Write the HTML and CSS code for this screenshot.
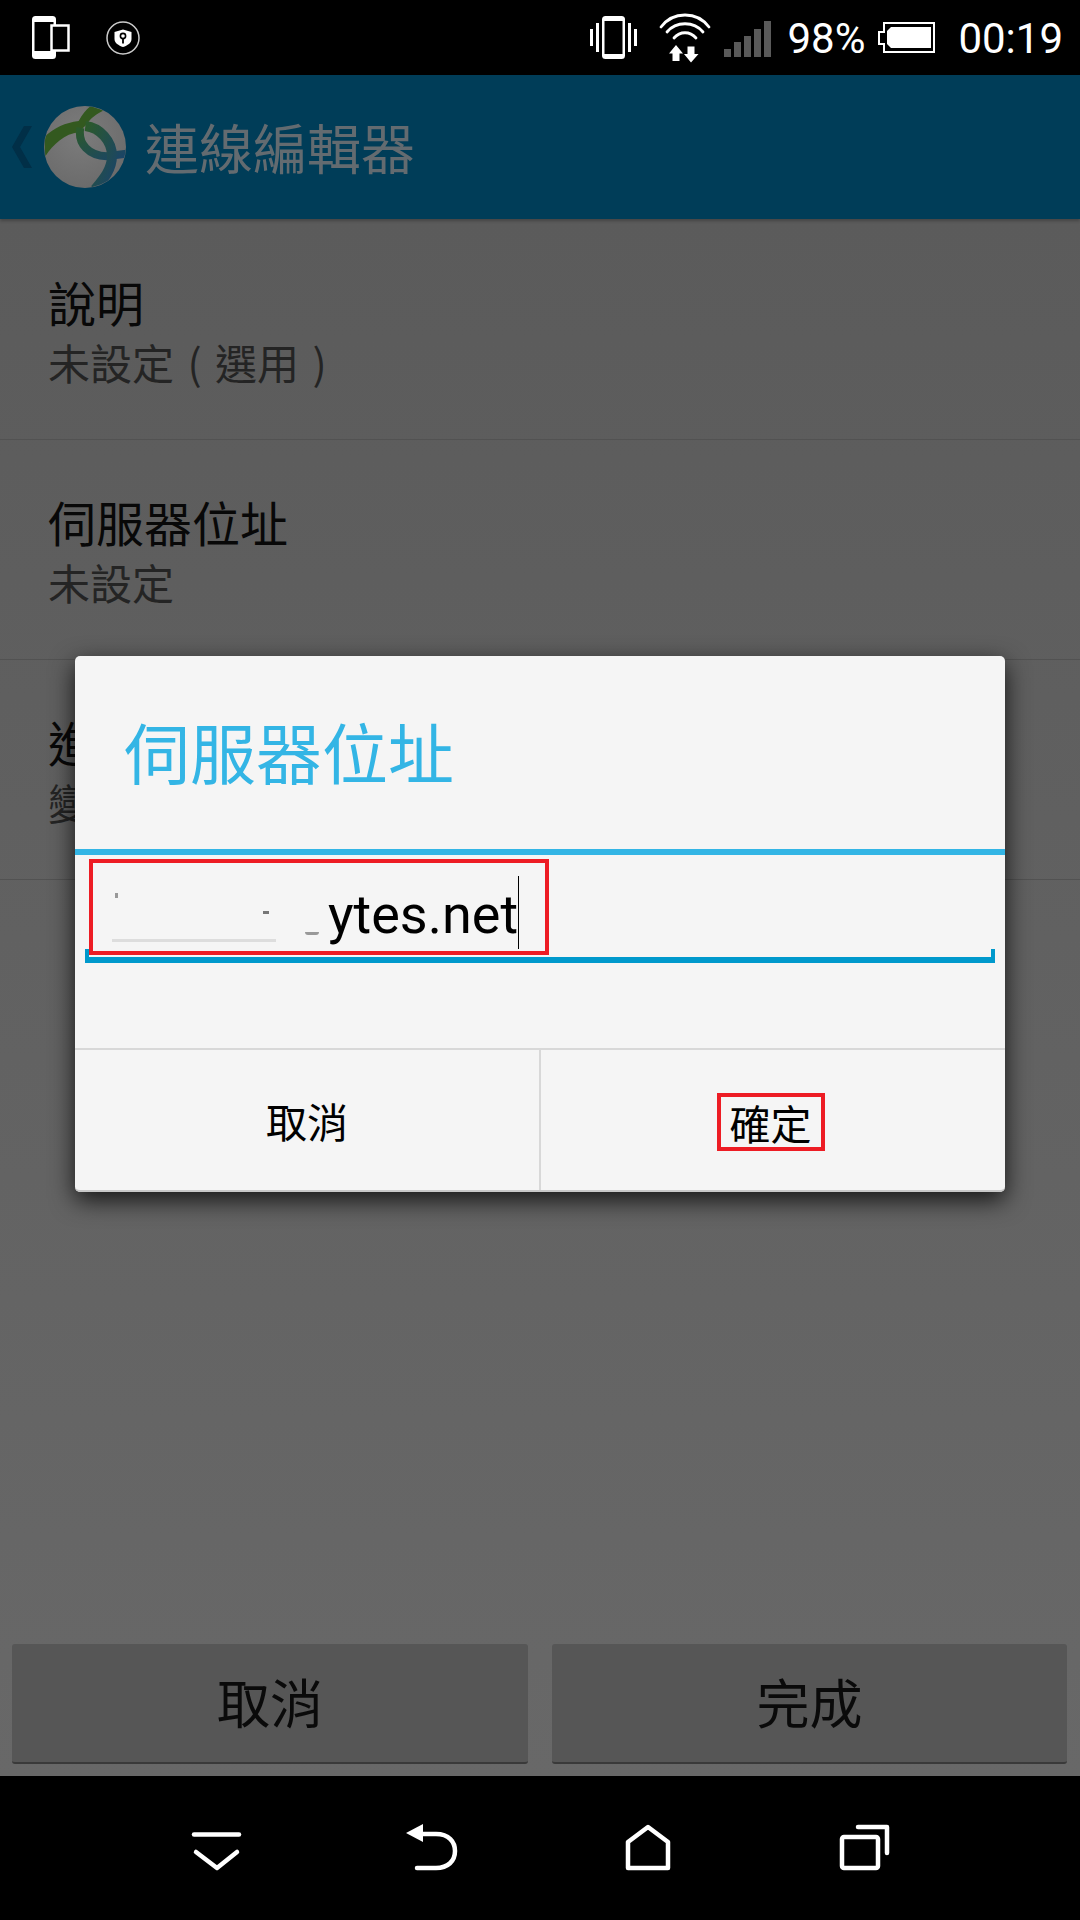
FILE: index.html
```html
<!DOCTYPE html>
<html lang="zh-Hant">
<head>
    <meta charset="UTF-8">
    <meta name="viewport" content="width=device-width, initial-scale=1.0">
    <title>連線編輯器</title>
    <link rel="stylesheet" href="styles.css">
</head>
<body>
    <div class="screen">
        <!-- Barra de status -->
        <div class="status-bar">
            <svg class="ic-devices" width="38" height="43" viewBox="0 0 38 43">
                <rect x="0" y="0" width="24" height="43" rx="3.500" fill="#fff"/>
                <rect x="2.500" y="6" width="19" height="29" fill="#000"/>
                <rect x="19.500" y="9.500" width="17" height="25" fill="#000" stroke="#fff" stroke-width="2.500"/>
            </svg>
            <svg class="ic-shield" width="34" height="34" viewBox="0 0 34 34">
                <circle cx="17" cy="17" r="16" fill="none" stroke="#ccc" stroke-width="1.500"/>
                <path d="M17 8.500 L25.500 11 V18 C25.500 22 21.500 24.500 17 26 C12.500 24.500 8.500 22 8.500 18 V11 Z" fill="#fff"/>
                <circle cx="17" cy="15" r="2.600" fill="none" stroke="#000" stroke-width="1.600"/>
                <path d="M17 17.500 V22.500" stroke="#000" stroke-width="1.800"/>
            </svg>
            <div class="status-spacer"></div>
            <svg class="ic-vibrate" width="47" height="43" viewBox="0 0 47 43">
                <rect x="12" y="0" width="23" height="43" rx="3.500" fill="#fff"/>
                <rect x="14.500" y="5" width="18" height="33" fill="#000"/>
                <path d="M1.500 13 V30 M7.500 7 V36 M39.500 7 V36 M45.500 13 V30" stroke="#fff" stroke-width="3"/>
            </svg>
            <svg class="ic-wifi" width="52" height="51" viewBox="0 0 52 51">
                <g fill="none" stroke="#fff" stroke-width="2.800" stroke-linecap="round">
                    <path d="M2 15 C14 -1 38 -1 50 15"/>
                    <path d="M8 20 C17 9 35 9 44 20"/>
                    <path d="M15 26 C21 19 31 19 37 26"/>
                </g>
                <path d="M17 33 L10 41.500 H13.500 V49 H20.500 V41.500 H24 Z" fill="#fff"/>
                <path d="M28.500 34.500 H35.500 V42 H39.500 L32 50.500 L25 42 H28.500 Z" fill="#fff"/>
            </svg>
            <svg class="ic-signal" width="47" height="36" viewBox="0 0 47 36">
                <rect x="0" y="28" width="7" height="8" fill="#5a5a5a"/>
                <rect x="10" y="21" width="7" height="15" fill="#5a5a5a"/>
                <rect x="20" y="15" width="7" height="21" fill="#5a5a5a"/>
                <rect x="30" y="8" width="7" height="28" fill="#5a5a5a"/>
                <rect x="40" y="0" width="7" height="36" fill="#5a5a5a"/>
            </svg>
            <span class="status-text battery-pct">98%</span>
            <svg class="ic-battery" width="57" height="31" viewBox="0 0 57 31">
                <path d="M6 1 H56 V30 H6 V22 H1 V10 H6 Z" fill="none" stroke="#fff" stroke-width="2"/>
                <rect x="13" y="5" width="40" height="21" fill="#fff"/>
                <path d="M9 9 V22 L13 26 V5 Z" fill="#fff"/>
            </svg>
            <span class="status-text clock">00:19</span>
        </div>

        <div class="app">
            <!-- Barra superior -->
            <div class="app-bar">
                <svg class="ic-back" width="20" height="42" viewBox="0 0 20 42">
                    <path d="M20 0 H12 L0 21 L12 42 H20 L8 21 Z" fill="#012f47"/>
                </svg>
                <svg class="app-logo" width="82" height="82" viewBox="132 35 246 246">
                    <defs>
                        <clipPath id="ball"><circle cx="255" cy="158" r="122"/></clipPath>
                        <radialGradient id="shade" cx="0.45" cy="0.35" r="0.7">
                            <stop offset="0" stop-color="#7c7c7c"/>
                            <stop offset="1" stop-color="#6a6a6a"/>
                        </radialGradient>
                        <linearGradient id="loop" x1="0" y1="0" x2="1" y2="1">
                            <stop offset="0" stop-color="#2c5a2a"/>
                            <stop offset="1" stop-color="#1a4468"/>
                        </linearGradient>
                    </defs>
                    <circle cx="255" cy="158" r="123" fill="url(#shade)"/>
                    <g clip-path="url(#ball)">
                        <path d="M132 128 C165 100 195 85 236 80 C246 62 258 45 272 35 L312 48 C288 60 272 72 262 88 L236 114 C195 118 160 150 136 186 Z" fill="#33591f"/>
                        <path d="M241 100 C232 150 268 184 320 186 L380 178" fill="none" stroke="url(#loop)" stroke-width="24"/>
                        <path d="M256 95 C300 100 336 140 336 185 C336 225 310 255 285 285" fill="none" stroke="url(#loop)" stroke-width="30"/>
                    </g>
                </svg>
                <h1 class="app-title">連線編輯器</h1>
            </div>

            <div class="content">
                <div class="list">
                    <div class="list-row">
                        <p class="row-title">說明</p>
                        <p class="row-sub">未設定 ( 選用 )</p>
                    </div>
                    <div class="list-row">
                        <p class="row-title">伺服器位址</p>
                        <p class="row-sub">未設定</p>
                    </div>
                    <div class="list-row">
                        <p class="row-title">進階</p>
                        <p class="row-sub">變更</p>
                    </div>
                </div>
                <div class="footer">
                    <button class="footer-btn">取消</button>
                    <button class="footer-btn">完成</button>
                </div>
            </div>

            <!-- Diálogo -->
            <div class="overlay">
                <div class="dialog">
                    <div class="dialog-title">伺服器位址</div>
                    <div class="dialog-body">
                        <div class="field">
                            <span class="redacted">
                                <i class="smudge smudge-a"></i>
                                <i class="smudge smudge-b"></i>
                                <i class="smudge smudge-c"></i>
                                <i class="smudge smudge-line"></i>
                            </span>
                            <span class="field-text">ytes.net</span>
                            <span class="caret"></span>
                        </div>
                    </div>
                    <div class="dialog-actions">
                        <button class="dialog-btn">取消</button>
                        <button class="dialog-btn"><span class="mark">確定</span></button>
                    </div>
                    <div class="mark-field"></div>
                </div>
            </div>
        </div>

        <!-- Barra de navegação -->
        <div class="nav-bar">
            <svg width="56" height="50" viewBox="0 0 56 50">
                <g fill="none" stroke="#fff" stroke-width="4.500" stroke-linecap="round" stroke-linejoin="round">
                    <path d="M4 11.500 H49"/>
                    <path d="M6 29 L27 45 L47 29"/>
                </g>
            </svg>
            <svg width="56" height="50" viewBox="0 0 56 50">
                <path d="M1 10 L18 1 V19 Z" fill="#fff"/>
                <path d="M16 11 H31 C44 11 50 19 50 28 C50 38 43 45 31 45 H12" fill="none" stroke="#fff" stroke-width="4.500" stroke-linecap="round"/>
            </svg>
            <svg width="56" height="50" viewBox="0 0 56 50">
                <path d="M8 45 V19 L28 4 L48 19 V45 Z" fill="none" stroke="#fff" stroke-width="4.500" stroke-linejoin="round"/>
            </svg>
            <svg width="56" height="50" viewBox="0 0 56 50">
                <rect x="7" y="14" width="36" height="31" rx="2" fill="none" stroke="#fff" stroke-width="4.500"/>
                <path d="M23 4 H52 V30" fill="none" stroke="#fff" stroke-width="4.500" stroke-linecap="round" stroke-linejoin="round"/>
            </svg>
        </div>
    </div>
</body>
</html>
```
FILE: styles.css
```css
:root {
    --bar-color: #003d58;
    --row-line: #525252;
    --dialog-bg: #f5f5f5;
    --dialog-line: #d8d8d8;
    --holo-light: #33b5e5;
    --holo-dark: #0099cc;
    --mark-red: #ed1c24;
}

* {
    box-sizing: border-box;
}

html,
body {
    margin: 0;
    padding: 0;
    height: 100%;
    background-color: #000;
}

body {
    font-family: 'Noto Sans CJK TC', 'Roboto', sans-serif;
    overflow: hidden;
}

p,
h1 {
    margin: 0;
    font-weight: 400;
}

.screen {
    display: flex;
    flex-direction: column;
    width: 1080px;
    height: 1920px;
}

/* Barra de status */
.status-bar {
    display: flex;
    align-items: center;
    flex: 0 0 75px;
    padding: 0 17px 0 32px;
    background-color: #000;
}

.status-spacer {
    flex: 1;
}

.status-text {
    margin-top: 2px;
    font-family: 'Roboto', sans-serif;
    font-size: 42px;
    line-height: 73px;
    color: #fff;
}

.ic-shield {
    margin-left: 36px;
}

.ic-wifi {
    margin-left: 22px;
}

.ic-signal {
    margin-left: 13px;
    margin-top: 3px;
}

.battery-pct {
    margin-left: 16px;
}

.ic-battery {
    margin-left: 13px;
}

.clock {
    margin-left: 23px;
}

/* Área do app */
.app {
    position: relative;
    flex: 1;
    display: flex;
    flex-direction: column;
    min-height: 0;
}

.app-bar {
    display: flex;
    align-items: center;
    flex: 0 0 144px;
    padding-left: 12px;
    background-color: var(--bar-color);
    box-shadow: 0 2px 3px rgba(0, 0, 0, 0.25);
    position: relative;
}

.app-logo {
    margin-left: 12px;
}

.app-title {
    margin-left: 19px;
    font-size: 54px;
    line-height: 60px;
    color: #636b70;
}

.content {
    flex: 1;
    display: flex;
    flex-direction: column;
    justify-content: space-between;
    background: linear-gradient(#5b5b5b, #686868);
}

.list {
    padding-top: 1px;
}

.list-row {
    height: 220px;
    padding: 51px 0 0 48px;
    border-bottom: 1px solid var(--row-line);
}

.row-title {
    font-size: 48px;
    line-height: 60px;
    color: #080808;
}

.row-sub {
    margin-top: 5px;
    font-size: 42px;
    line-height: 52px;
    word-spacing: 4px;
    color: #242424;
}

.footer {
    display: grid;
    grid-template-columns: 516px 515px;
    gap: 24px;
    padding: 0 13px 12px 12px;
}

.footer-btn {
    height: 120px;
    padding: 0 0 4px;
    border: none;
    border-bottom: 2px solid #3a3a3a;
    border-radius: 3px;
    background-color: #565656;
    font-family: inherit;
    font-size: 53px;
    color: #0a0a0a;
}

/* Diálogo */
.overlay {
    position: absolute;
    inset: 0;
    display: flex;
    justify-content: center;
    align-items: center;
    padding-bottom: 3px;
}

.dialog {
    position: relative;
    display: flex;
    flex-direction: column;
    width: 930px;
    height: 536px;
    border-radius: 5px;
    background-color: var(--dialog-bg);
    box-shadow: 0 8px 24px rgba(0, 0, 0, 0.8);
}

.dialog-title {
    display: flex;
    align-items: center;
    flex: 0 0 199px;
    padding: 0 0 6px 49px;
    border-bottom: 6px solid var(--holo-light);
    font-size: 66px;
    color: var(--holo-light);
}

.dialog-body {
    flex: 1;
    padding: 0 10px;
}

.field {
    position: relative;
    display: flex;
    align-items: flex-end;
    height: 108px;
    border-bottom: 6px solid var(--holo-dark);
}

.field::before,
.field::after {
    content: "";
    position: absolute;
    bottom: -6px;
    width: 4px;
    height: 14px;
    background-color: var(--holo-dark);
}

.field::before {
    left: 0;
}

.field::after {
    right: 0;
}

.redacted {
    position: relative;
    flex: 0 0 243px;
    height: 100%;
}

.smudge {
    position: absolute;
    display: block;
    background-color: #999;
    filter: blur(0.6px);
}

.smudge-a {
    left: 30px;
    top: 38px;
    width: 3px;
    height: 5px;
}

.smudge-b {
    left: 178px;
    top: 56px;
    width: 6px;
    height: 3px;
    background-color: #777;
}

.smudge-c {
    left: 220px;
    top: 77px;
    width: 14px;
    height: 3px;
    border-radius: 0 0 8px 8px;
}

.smudge-line {
    left: 27px;
    top: 84px;
    width: 164px;
    height: 3px;
    background-color: #ddd;
}

.field-text {
    font-family: 'Roboto', sans-serif;
    font-size: 54px;
    line-height: 72px;
    color: #000;
    padding-bottom: 6px;
}

.caret {
    align-self: flex-end;
    width: 1px;
    height: 73px;
    margin-bottom: 8px;
    background-color: #000;
}

.dialog-actions {
    display: grid;
    grid-template-columns: 464px 466px;
    flex: 0 0 144px;
    border-top: 2px solid var(--dialog-line);
    border-bottom: 2px solid #c8c8c8;
    border-radius: 0 0 5px 5px;
}

.dialog-btn {
    display: flex;
    justify-content: center;
    align-items: center;
    padding: 0;
    border: none;
    background: none;
    font-family: inherit;
    font-size: 41px;
    color: #000;
}

.dialog-btn + .dialog-btn {
    border-left: 2px solid var(--dialog-line);
}

.mark {
    display: block;
    margin: 4px 5px 0 0;
    padding: 0 9px;
    border: 4px solid var(--mark-red);
    line-height: 50px;
}

.mark-field {
    position: absolute;
    left: 14px;
    top: 203px;
    width: 460px;
    height: 96px;
    border: 4px solid var(--mark-red);
}

/* Barra de navegação */
.nav-bar {
    display: flex;
    flex: 0 0 144px;
    gap: 159px;
    padding: 47px 0 0 190px;
    background-color: #000;
}
```
